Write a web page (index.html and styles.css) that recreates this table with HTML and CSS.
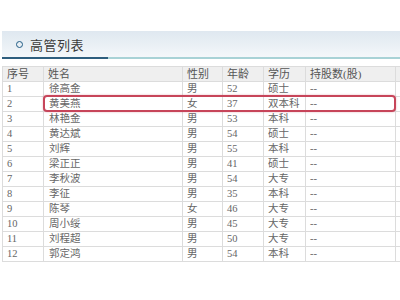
FILE: index.html
```html
<!DOCTYPE html>
<html lang="zh">
<head>
<meta charset="utf-8">
<title>高管列表</title>
<link rel="stylesheet" href="styles.css">
</head>
<body>
<div class="page">
  <div class="panel-head">
    <span class="ring"></span>
    <span class="title">高管列表</span>
  </div>
  <div class="rule"></div>
  <div class="table-wrap">
    <table class="grid">
      <colgroup>
        <col class="c-no"><col class="c-name"><col class="c-sex"><col class="c-age"><col class="c-edu"><col class="c-share"><col class="c-pay">
      </colgroup>
      <thead>
        <tr><th>序号</th><th>姓名</th><th>性别</th><th>年龄</th><th>学历</th><th>持股数(股)</th><th>薪酬(万元)</th></tr>
      </thead>
      <tbody>
        <tr><td>1</td><td>徐高金</td><td>男</td><td>52</td><td>硕士</td><td>--</td><td>8</td></tr>
        <tr><td>2</td><td>黄美燕</td><td>女</td><td>37</td><td>双本科</td><td>--</td><td>1</td></tr>
        <tr><td>3</td><td>林艳金</td><td>男</td><td>53</td><td>本科</td><td>--</td><td>3</td></tr>
        <tr><td>4</td><td>黄达斌</td><td>男</td><td>54</td><td>硕士</td><td>--</td><td>5</td></tr>
        <tr><td>5</td><td>刘辉</td><td>男</td><td>55</td><td>本科</td><td>--</td><td>5</td></tr>
        <tr><td>6</td><td>梁正正</td><td>男</td><td>41</td><td>硕士</td><td>--</td><td>4</td></tr>
        <tr><td>7</td><td>李秋波</td><td>男</td><td>54</td><td>大专</td><td>--</td><td>5</td></tr>
        <tr><td>8</td><td>李征</td><td>男</td><td>35</td><td>本科</td><td>--</td><td>5</td></tr>
        <tr><td>9</td><td>陈琴</td><td>女</td><td>46</td><td>大专</td><td>--</td><td>1</td></tr>
        <tr><td>10</td><td>周小绥</td><td>男</td><td>45</td><td>大专</td><td>--</td><td>4</td></tr>
        <tr><td>11</td><td>刘程超</td><td>男</td><td>50</td><td>大专</td><td>--</td><td>1</td></tr>
        <tr><td>12</td><td>郭定鸿</td><td>男</td><td>54</td><td>本科</td><td>--</td><td>3</td></tr>
      </tbody>
    </table>
    <div class="highlight"></div>
  </div>
</div>
</body>
</html>
```
FILE: styles.css
```css
html, body {
  margin: 0;
  padding: 0;
  background: #ffffff;
  overflow: hidden;
}
.page {
  width: 400px;
  height: 300px;
  padding-top: 31px;
  box-sizing: border-box;
  overflow: hidden;
  font-family: "Liberation Serif", "Noto Sans CJK SC", serif;
}
.panel-head {
  height: 26px;
  margin-left: 2px;
  display: flex;
  align-items: center;
  padding-left: 14px;
  background: linear-gradient(to bottom, #dfe8f0 0%, #eaf0f5 55%, #f4f7fa 100%);
}
.ring {
  width: 5px;
  height: 5px;
  border: 1.6px solid #1f5b84;
  border-radius: 50%;
  margin-right: 7px;
}
.title {
  font-family: "Noto Sans CJK SC", sans-serif;
  font-size: 13px;
  color: #3a3a3a;
  letter-spacing: 0.5px;
}
.rule {
  height: 2px;
  margin-left: 2px;
  background: linear-gradient(to right, #2e5e7e 0, #2e5e7e 106px, #a8d2d6 106px, #a8d2d6 100%);
}
.table-wrap {
  position: relative;
  margin-top: 7px;
  margin-left: 2px;
  width: 460px;
}
.grid {
  border-collapse: collapse;
  table-layout: fixed;
  width: 460px;
  font-size: 10.5px;
  color: #666666;
}
.c-no { width: 41px; }
.c-name { width: 139px; }
.c-sex { width: 40px; }
.c-age { width: 41px; }
.c-edu { width: 42px; }
.c-share { width: 90px; }
.c-pay { width: 67px; }
.grid th,
.grid td {
  height: 14px;
  padding: 0 0 0 4px;
  border: 1px solid #dcdcdc;
  text-align: left;
  font-weight: normal;
  line-height: 14px;
  white-space: nowrap;
  overflow: hidden;
}
.grid th {
  background: #efefef;
  color: #555555;
  font-size: 11px;
}
.grid td:nth-child(2) {
  padding-left: 5px;
}
.highlight {
  position: absolute;
  left: 41px;
  top: 29px;
  width: 353px;
  height: 17px;
  box-sizing: border-box;
  border: 2px solid #c7455a;
  border-radius: 4px;
  box-shadow: 0 0 2px rgba(200, 70, 90, 0.45);
  pointer-events: none;
}
```
